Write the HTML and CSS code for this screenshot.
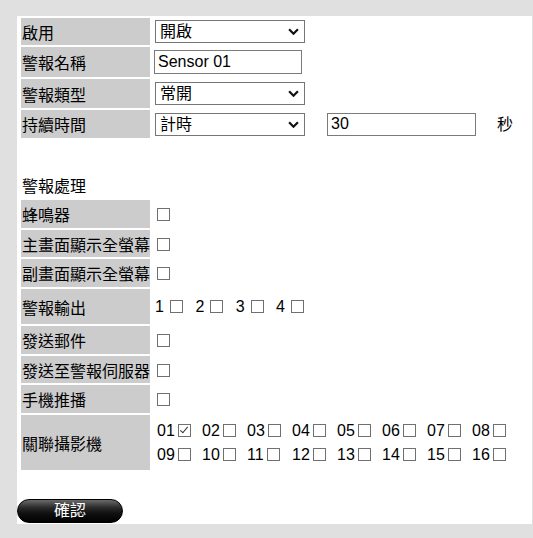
FILE: index.html
```html
<!DOCTYPE html>
<html lang="zh-Hant">
<head>
    <meta charset="UTF-8">
    <meta name="viewport" content="width=device-width, initial-scale=1.0">
    <title>警報設定</title>
    <link rel="stylesheet" href="styles.css">
</head>
<body>
    <div class="panel">
        <table class="form-table">
            <tr class="row-sm">
                <td class="label">啟用</td>
                <td class="value">
                    <span class="select-wrap">
                        <select><option>開啟</option><option>關閉</option></select>
                        <svg class="chevron" viewBox="0 0 10 6"><polyline points="1,1 5,5 9,1"/></svg>
                    </span>
                </td>
            </tr>
            <tr class="row-lg">
                <td class="label">警報名稱</td>
                <td class="value"><input type="text" class="text-input name-input" value="Sensor 01"></td>
            </tr>
            <tr class="row-md">
                <td class="label">警報類型</td>
                <td class="value">
                    <span class="select-wrap">
                        <select><option>常開</option><option>常閉</option></select>
                        <svg class="chevron" viewBox="0 0 10 6"><polyline points="1,1 5,5 9,1"/></svg>
                    </span>
                </td>
            </tr>
            <tr>
                <td class="label">持續時間</td>
                <td class="value">
                    <div class="duration">
                        <span class="select-wrap">
                            <select><option>計時</option><option>持續</option></select>
                            <svg class="chevron" viewBox="0 0 10 6"><polyline points="1,1 5,5 9,1"/></svg>
                        </span>
                        <input type="text" class="text-input seconds-input" value="30">
                        <span class="unit">秒</span>
                    </div>
                </td>
            </tr>
            <tr>
                <td colspan="2"></td>
            </tr>
            <tr>
                <td colspan="2" class="title">警報處理</td>
            </tr>
            <tr>
                <td class="label">蜂鳴器</td>
                <td class="value"><input type="checkbox" class="check single"></td>
            </tr>
            <tr class="row-sm">
                <td class="label">主畫面顯示全螢幕</td>
                <td class="value"><input type="checkbox" class="check single"></td>
            </tr>
            <tr>
                <td class="label">副畫面顯示全螢幕</td>
                <td class="value"><input type="checkbox" class="check single"></td>
            </tr>
            <tr class="row-xl">
                <td class="label">警報輸出</td>
                <td class="value">
                    <label class="out-item">1<input type="checkbox" class="check"></label>
                    <label class="out-item">2<input type="checkbox" class="check"></label>
                    <label class="out-item">3<input type="checkbox" class="check"></label>
                    <label class="out-item">4<input type="checkbox" class="check"></label>
                </td>
            </tr>
            <tr>
                <td class="label">發送郵件</td>
                <td class="value"><input type="checkbox" class="check single"></td>
            </tr>
            <tr class="row-sm">
                <td class="label">發送至警報伺服器</td>
                <td class="value"><input type="checkbox" class="check single"></td>
            </tr>
            <tr>
                <td class="label">手機推播</td>
                <td class="value"><input type="checkbox" class="check single"></td>
            </tr>
            <tr class="row-cams">
                <td class="label">關聯攝影機</td>
                <td class="value">
                    <div class="cam-grid">
                        <label class="cam">01<input type="checkbox" class="check" checked></label>
                        <label class="cam">02<input type="checkbox" class="check"></label>
                        <label class="cam">03<input type="checkbox" class="check"></label>
                        <label class="cam">04<input type="checkbox" class="check"></label>
                        <label class="cam">05<input type="checkbox" class="check"></label>
                        <label class="cam">06<input type="checkbox" class="check"></label>
                        <label class="cam">07<input type="checkbox" class="check"></label>
                        <label class="cam">08<input type="checkbox" class="check"></label>
                        <label class="cam">09<input type="checkbox" class="check"></label>
                        <label class="cam">10<input type="checkbox" class="check"></label>
                        <label class="cam">11<input type="checkbox" class="check"></label>
                        <label class="cam">12<input type="checkbox" class="check"></label>
                        <label class="cam">13<input type="checkbox" class="check"></label>
                        <label class="cam">14<input type="checkbox" class="check"></label>
                        <label class="cam">15<input type="checkbox" class="check"></label>
                        <label class="cam">16<input type="checkbox" class="check"></label>
                    </div>
                </td>
            </tr>
        </table>

        <button class="confirm-btn">確認</button>
    </div>
</body>
</html>
```

FILE: styles.css
```css
/* Page */
body {
    margin: 0;
    background: #e0e0e0;
    font-family: "Liberation Sans", "Noto Sans CJK TC", sans-serif;
    font-size: 16px;
    color: #000;
}

/* White settings panel */
.panel {
    background: #fff;
    margin: 16px 1px 0 17px;
    padding-bottom: 1px;
}

.form-table {
    border-spacing: 2px;
    margin: 2px 0 0 2px;
}

.form-table td {
    box-sizing: border-box;
    height: 28px;
    padding: 0;
    line-height: 18px;
    vertical-align: middle;
}

.form-table tr.row-sm td { height: 27px; }
.form-table tr.row-md td { height: 29px; }
.form-table tr.row-lg td { height: 30px; }
.form-table tr.row-xl td { height: 35px; }
.form-table tr.row-cams td { height: 55px; }

/* CJK glyphs sit high on the Latin baseline, nudge labels down */
.form-table td.label {
    background: #ccc;
    width: 129px;
    padding: 4px 0 0 1px;
    white-space: nowrap;
}

.form-table td.value {
    padding-left: 3px;
    white-space: nowrap;
}

.form-table td.title {
    padding: 5px 0 0 1px;
}

/* Dropdowns */
.select-wrap {
    position: relative;
    display: inline-block;
    vertical-align: middle;
}

.select-wrap select {
    appearance: none;
    -webkit-appearance: none;
    width: 150px;
    height: 23px;
    margin: 0;
    padding: 1px 0 0 4px;
    border: 1px solid #767676;
    border-radius: 0;
    background: #fff;
    font: inherit;
    line-height: 20px;
    color: #000;
}

.chevron {
    position: absolute;
    right: 6px;
    top: 8px;
    width: 11px;
    height: 7px;
    fill: none;
    stroke: #111;
    stroke-width: 2;
    pointer-events: none;
}

/* Text inputs */
.text-input {
    box-sizing: border-box;
    height: 24px;
    margin: 0;
    padding: 0 0 0 3px;
    border: 1px solid #7a7a7a;
    font: inherit;
    color: #000;
    vertical-align: middle;
}

.name-input {
    width: 148px;
    margin-left: -1px;
}

.duration {
    display: flex;
    align-items: center;
}

.seconds-input {
    width: 149px;
    height: 23px;
    margin-left: 22px;
}

.unit {
    margin-left: 21px;
    padding-top: 2px;
}

/* Checkboxes */
.check {
    appearance: none;
    -webkit-appearance: none;
    position: relative;
    box-sizing: border-box;
    width: 13px;
    height: 13px;
    margin: 0;
    border: 1px solid #707070;
    background: #fff;
    vertical-align: middle;
}

.check:checked::after {
    content: "";
    position: absolute;
    left: 3px;
    top: 0px;
    width: 3px;
    height: 7px;
    border-right: 1.5px solid #333;
    border-bottom: 1.5px solid #333;
    transform: rotate(40deg);
}

.check.single {
    margin-left: 2px;
}

.out-item {
    display: inline-flex;
    align-items: center;
    margin-right: 8px;
}

.out-item .check {
    margin-left: 6px;
}

.cam-grid {
    display: grid;
    grid-template-columns: repeat(8, 45px);
    grid-auto-rows: 24px;
    margin-left: 2px;
}

.cam {
    display: flex;
    align-items: center;
}

.cam .check {
    margin-left: 3px;
}

/* Confirm button */
.confirm-btn {
    display: block;
    width: 106px;
    height: 24px;
    margin: 27px 0 0 0;
    padding: 0;
    border: 1px solid #000;
    border-radius: 12px;
    background: linear-gradient(#6a6a6a 0%, #2a2a2a 35%, #111 60%, #000 100%);
    color: #fff;
    font: inherit;
    line-height: 20px;
    cursor: pointer;
}
```
